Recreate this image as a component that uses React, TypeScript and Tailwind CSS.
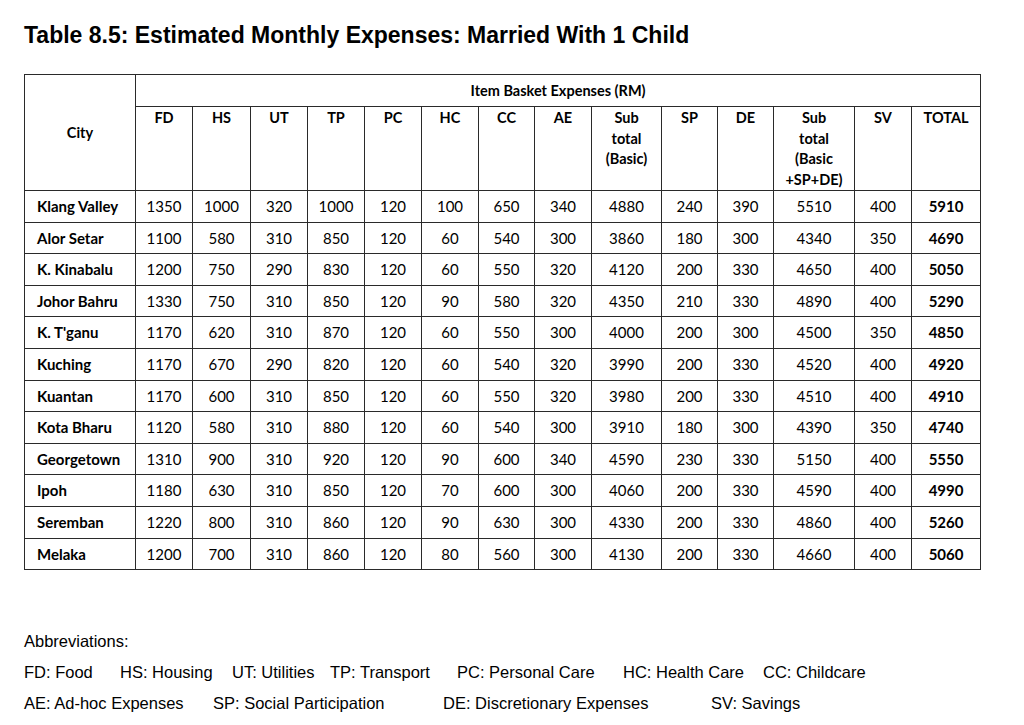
import React from "react";

const COLUMNS = [
  { label: ["FD"], w: "w-[57px]" },
  { label: ["HS"], w: "w-[58px]" },
  { label: ["UT"], w: "w-[57px]" },
  { label: ["TP"], w: "w-[57px]" },
  { label: ["PC"], w: "w-[57px]" },
  { label: ["HC"], w: "w-[57px]" },
  { label: ["CC"], w: "w-[56px]" },
  { label: ["AE"], w: "w-[57px]" },
  { label: ["Sub", "total", "(Basic)"], w: "w-[70px]" },
  { label: ["SP"], w: "w-[56px]" },
  { label: ["DE"], w: "w-[56px]" },
  { label: ["Sub", "total", "(Basic", "+SP+DE)"], w: "w-[81px]" },
  { label: ["SV"], w: "w-[57px]" },
  { label: ["TOTAL"], w: "w-[69px]" },
];

const ROWS: [string, number[]][] = [
  ["Klang Valley", [1350, 1000, 320, 1000, 120, 100, 650, 340, 4880, 240, 390, 5510, 400, 5910]],
  ["Alor Setar", [1100, 580, 310, 850, 120, 60, 540, 300, 3860, 180, 300, 4340, 350, 4690]],
  ["K. Kinabalu", [1200, 750, 290, 830, 120, 60, 550, 320, 4120, 200, 330, 4650, 400, 5050]],
  ["Johor Bahru", [1330, 750, 310, 850, 120, 90, 580, 320, 4350, 210, 330, 4890, 400, 5290]],
  ["K. T'ganu", [1170, 620, 310, 870, 120, 60, 550, 300, 4000, 200, 300, 4500, 350, 4850]],
  ["Kuching", [1170, 670, 290, 820, 120, 60, 540, 320, 3990, 200, 330, 4520, 400, 4920]],
  ["Kuantan", [1170, 600, 310, 850, 120, 60, 550, 320, 3980, 200, 330, 4510, 400, 4910]],
  ["Kota Bharu", [1120, 580, 310, 880, 120, 60, 540, 300, 3910, 180, 300, 4390, 350, 4740]],
  ["Georgetown", [1310, 900, 310, 920, 120, 90, 600, 340, 4590, 230, 330, 5150, 400, 5550]],
  ["Ipoh", [1180, 630, 310, 850, 120, 70, 600, 300, 4060, 200, 330, 4590, 400, 4990]],
  ["Seremban", [1220, 800, 310, 860, 120, 90, 630, 300, 4330, 200, 330, 4860, 400, 5260]],
  ["Melaka", [1200, 700, 310, 860, 120, 80, 560, 300, 4130, 200, 330, 4660, 400, 5060]],
];

const ABBR_LINE_1 = [
  { text: "FD: Food", w: "w-[96px]" },
  { text: "HS: Housing", w: "w-[112px]" },
  { text: "UT: Utilities", w: "w-[98px]" },
  { text: "TP: Transport", w: "w-[127px]" },
  { text: "PC: Personal Care", w: "w-[166px]" },
  { text: "HC: Health Care", w: "w-[140px]" },
  { text: "CC: Childcare", w: "" },
];

const ABBR_LINE_2 = [
  { text: "AE: Ad-hoc Expenses", w: "w-[189px]" },
  { text: "SP: Social Participation", w: "w-[230px]" },
  { text: "DE: Discretionary Expenses", w: "w-[268px]" },
  { text: "SV: Savings", w: "" },
];

const cell = "border border-[#2a2a2a]";

export default function App() {
  return (
    <div className="min-h-screen w-[1024px] bg-white pl-6 pt-[22px] text-black">
      {/* Title */}
      <h1 className="font-['Liberation_Sans',Arial,sans-serif] text-[23px] font-bold leading-[26px]">
        Table 8.5: Estimated Monthly Expenses: Married With 1 Child
      </h1>

      {/* Expense table */}
      <table className="mt-[26px] w-[956px] table-fixed border-collapse font-['Lato',sans-serif] text-[15px]">
        <colgroup>
          <col className="w-[111px]" />
          {COLUMNS.map((c, i) => (
            <col key={i} className={c.w} />
          ))}
        </colgroup>
        <thead>
          <tr className="h-[32px]">
            <th rowSpan={2} className={`${cell} align-middle text-[14.5px] font-bold`}>
              City
            </th>
            <th colSpan={14} className={`${cell} align-middle text-[14.5px] font-bold`}>
              Item Basket Expenses (RM)
            </th>
          </tr>
          <tr className="h-[83px]">
            {COLUMNS.map((c, i) => (
              <th
                key={i}
                className={`${cell} pt-[1px] align-top text-[14.5px] font-bold leading-[20.5px]`}
              >
                {c.label.map((l, j) => (
                  <div key={j}>{l}</div>
                ))}
              </th>
            ))}
          </tr>
        </thead>
        <tbody>
          {ROWS.map(([city, vals]) => (
            <tr key={city} className="h-[31.6px]">
              <td className={`${cell} pl-3 text-left font-bold`}>{city}</td>
              {vals.map((v, i) => (
                <td
                  key={i}
                  className={`${cell} text-center ${i === vals.length - 1 ? "font-bold" : ""}`}
                >
                  {v}
                </td>
              ))}
            </tr>
          ))}
        </tbody>
      </table>

      {/* Abbreviations */}
      <div className="mt-[56px] font-['Liberation_Sans',Arial,sans-serif] text-[16.5px] leading-[31px]">
        <div>Abbreviations:</div>
        <div className="flex">
          {ABBR_LINE_1.map((a) => (
            <span key={a.text} className={`${a.w} shrink-0 whitespace-nowrap`}>
              {a.text}
            </span>
          ))}
        </div>
        <div className="flex">
          {ABBR_LINE_2.map((a) => (
            <span key={a.text} className={`${a.w} shrink-0 whitespace-nowrap`}>
              {a.text}
            </span>
          ))}
        </div>
      </div>
    </div>
  );
}
